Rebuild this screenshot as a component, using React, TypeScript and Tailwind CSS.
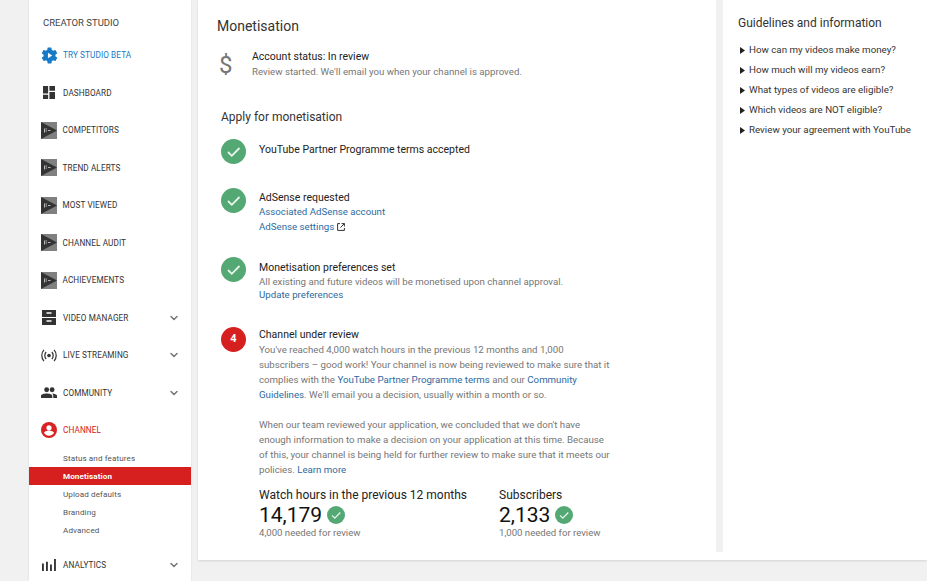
import React from "react";
import { ChevronDown } from "lucide-react";

function Vid() {
  return (
    <svg width="16" height="17" viewBox="0 0 16 17" className="block shrink-0">
      <rect width="16" height="17" fill="#808080" />
      <path d="M0 0 L16 8.5 L0 17 Z" fill="#333333" />
      <path d="M3.500 6.500v4M4.500 7h1.500M4.500 9h1.500M7 8.500h2.500" stroke="#c8c8c8" strokeWidth="0.9" fill="none" />
    </svg>
  );
}

const I = "#333333";
const icons: Record<string, React.ReactNode> = {
  gear: (
    <svg width="19" height="19" viewBox="0 0 24 24" className="block shrink-0">
      <path fill="#167ac6" d="M19.4 13c.04-.32.1-.66.1-1s-.06-.68-.1-1l2.1-1.65c.2-.15.25-.42.13-.64l-2-3.46c-.12-.22-.4-.3-.6-.22l-2.5 1c-.52-.4-1.08-.73-1.7-.98l-.38-2.65A.5.5 0 0 0 14 2h-4a.5.5 0 0 0-.5.42l-.37 2.65c-.62.25-1.18.58-1.7.98l-2.5-1c-.22-.08-.48 0-.6.22l-2 3.46c-.13.22-.07.5.12.64L4.6 11c-.04.32-.1.66-.1 1s.06.68.1 1l-2.1 1.65c-.2.15-.25.42-.13.64l2 3.46c.12.22.4.3.6.22l2.5-1c.52.4 1.08.73 1.7.98l.38 2.65c.03.24.24.42.5.42h4c.26 0 .47-.18.5-.42l.37-2.65c.62-.25 1.18-.58 1.7-.98l2.5 1c.22.08.48 0 .6-.22l2-3.46c.12-.22.07-.5-.12-.64z" />
      <path fill="#fff" d="M10 8.500v7l5.500-3.500z" />
    </svg>
  ),
  dash: (
    <svg width="12" height="13" viewBox="0 0 14 14" preserveAspectRatio="none" className="block shrink-0">
      <path fill={I} d="M0 0h6v8H0zM0 9.500h6V14H0zM7.500 0H14v5H7.500zM7.500 6.500H14V14H7.500z" />
    </svg>
  ),
  video: (
    <svg width="14" height="15" viewBox="0 0 14 16" preserveAspectRatio="none" className="block shrink-0">
      <path fill={I} fillRule="evenodd" d="M0 0h14v7.400H0zM0 8.600h14V16H0zM4.500 2.500v1.400h5V2.500zM4.500 11v1.400h5V11z" />
    </svg>
  ),
  live: (
    <svg width="16" height="13" viewBox="0 0 18 14" preserveAspectRatio="none" className="block shrink-0">
      <circle cx="9" cy="7" r="2" fill={I} />
      <path d="M5.800 3.200c-2 2.100-2 5.500 0 7.600M12.200 3.200c2 2.100 2 5.500 0 7.600M3.300 1c-3.200 3.400-3.200 8.600 0 12M14.700 1c3.200 3.400 3.200 8.600 0 12" fill="none" stroke={I} strokeWidth="1.400" />
    </svg>
  ),
  community: (
    <svg width="16" height="11" viewBox="0 0 17 12" preserveAspectRatio="none" className="block shrink-0">
      <circle cx="6" cy="3" r="2.600" fill={I} />
      <circle cx="11.800" cy="3" r="2.600" fill={I} />
      <path fill={I} d="M0 12V9.600C0 7.800 3.500 7 6 7s6 .8 6 2.600V12zM13 12V9.400c0-.9-.4-1.700-1.100-2.300 2 .1 5.100.9 5.100 2.500V12z" />
    </svg>
  ),
  channel: (
    <svg width="16" height="16" viewBox="0 0 16 16" className="block shrink-0">
      <circle cx="8" cy="8" r="8" fill="#d92323" />
      <circle cx="8" cy="5.800" r="2.600" fill="#fff" />
      <path fill="#fff" d="M3 11.100c0-1.600 3.300-2.600 5-2.600s5 1 5 2.600c-1.100 1.600-3 2.700-5 2.700s-3.900-1.100-5-2.700z" />
    </svg>
  ),
  analytics: (
    <svg width="14" height="12" viewBox="0 0 15 13" preserveAspectRatio="none" className="block shrink-0">
      <path fill={I} d="M0 5h2v8H0zM4.300 3h2v10h-2zM8.600 6h2v7h-2zM12.900 0h2v13h-2z" />
    </svg>
  ),
};

function Nav({ icon, label, cls = "text-[#333333]", chev, vid }: { icon?: string; label: string; cls?: string; chev?: boolean; vid?: boolean }) {
  return (
    <div className="h-[37.5px] flex items-center pl-[12px] pr-[11px]">
      <div className={`w-[16px] shrink-0 flex justify-center ${vid ? "mr-[5.5px]" : "mr-[6px]"}`}>
        {vid ? <Vid /> : icons[icon!]}
      </div>
      <span className={`text-[8.2px] tracking-[0.1px] ${cls}`}>{label}</span>
      {chev && <ChevronDown size={12} strokeWidth={3} className="ml-auto text-[#767676]" />}
    </div>
  );
}

function Sub({ label, active }: { label: string; active?: boolean }) {
  return (
    <div className={`h-[18px] flex items-center pl-[34px] text-[8.1px] tracking-[0.1px] ${active ? "bg-[#d5201f] text-white font-bold" : "text-[#555555]"}`}>
      {label}
    </div>
  );
}

function Check({ size = 25 }: { size?: number }) {
  return (
    <svg width={size} height={size} viewBox="0 0 25 25" className="block shrink-0">
      <circle cx="12.500" cy="12.500" r="12.500" fill="#54a873" />
      <path d="M7 13l3.800 3.800L18.500 9" fill="none" stroke="#e9f5ee" strokeWidth="1.800" />
    </svg>
  );
}

const link = "text-[#2d6aa0]";

function Metric({ title, value, note, cls }: { title: string; value: string; note: string; cls: string }) {
  return (
    <div className={cls}>
      <div className="text-[12px] leading-[14px] text-[#222222]">{title}</div>
      <div className="flex items-center gap-[5px] h-[24px] mt-[1px]">
        <span className="text-[21px] leading-[24px] text-[#111111]">{value}</span>
        <Check size={18} />
      </div>
      <div className="text-[9.6px] leading-[14px] text-[#767676] -mt-[1px]">{note}</div>
    </div>
  );
}

export default function App() {
  return (
    <div className="h-[581px] w-[927px] overflow-hidden bg-[#f1f1f1] flex items-start pl-[29px] font-['Roboto',sans-serif]">
      <aside className="w-[162px] h-[581px] shrink-0 bg-white shadow-[0_0_2px_rgba(0,0,0,0.1)] pt-[16px]">
        <div className="pl-[14px] text-[9.5px] leading-[14px] text-[#444444] mb-[6.5px]">CREATOR STUDIO</div>
        <Nav icon="gear" label="TRY STUDIO BETA" cls="text-[#167ac6]" />
        <Nav icon="dash" label="DASHBOARD" />
        <Nav vid label="COMPETITORS" />
        <Nav vid label="TREND ALERTS" />
        <Nav vid label="MOST VIEWED" />
        <Nav vid label="CHANNEL AUDIT" />
        <Nav vid label="ACHIEVEMENTS" />
        <Nav icon="video" label="VIDEO MANAGER" chev />
        <Nav icon="live" label="LIVE STREAMING" chev />
        <Nav icon="community" label="COMMUNITY" chev />
        <Nav icon="channel" label="CHANNEL" cls="text-[#d5201f]" />
        <div>
          <Sub label="Status and features" />
          <Sub label="Monetisation" active />
          <Sub label="Upload defaults" />
          <Sub label="Branding" />
          <Sub label="Advanced" />
        </div>
        <div className="mt-[7.5px]">
          <Nav icon="analytics" label="ANALYTICS" chev />
        </div>
      </aside>

      <div className="ml-[7px] flex-1 h-[560px] bg-white shadow-[0_1px_2px_rgba(0,0,0,0.12)] flex items-start">
        <main className="w-[518px] shrink-0 pt-[18px] pl-[19px]">
          <h1 className="text-[14px] leading-[17px] text-[#333333]">Monetisation</h1>
          <div className="flex mt-[15px]">
            <div className="w-[35px] pl-[2px] text-[24px] leading-[28px] text-[#767676] pt-[1px]">$</div>
            <div>
              <div className="text-[10.5px] leading-[14px] text-[#222222]">Account status: In review</div>
              <div className="text-[9.7px] leading-[16px] text-[#767676]">Review started. We'll email you when your channel is approved.</div>
            </div>
          </div>
          <div className="pl-[4px]">
            <h2 className="mt-[29px] text-[12px] leading-[16px] text-[#333333]">Apply for monetisation</h2>
            <div className="flex mt-[14px]">
              <Check />
              <div className="ml-[13px] text-[10.5px] leading-[14px] text-[#222222] pt-[4px]">YouTube Partner Programme terms accepted</div>
            </div>
            <div className="flex mt-[24px]">
              <Check />
              <div className="ml-[13px] text-[10.5px] leading-[14px] text-[#222222] pt-[3px]">
                <div>AdSense requested</div>
                <div className={`text-[9.7px] leading-[14.5px] ${link}`}>Associated AdSense account</div>
                <div className={`text-[9.7px] leading-[14.5px] ${link} flex items-center gap-[3px]`}>
                  AdSense settings
                  <svg width="8" height="8" viewBox="0 0 8 8" className="block">
                    <path d="M3 .6H.6v6.800h6.800V5M4.500.6h2.900v2.900M7.400.6L3.500 4.500" fill="none" stroke="#333333" strokeWidth="1" />
                  </svg>
                </div>
              </div>
            </div>
            <div className="flex mt-[23px]">
              <Check />
              <div className="ml-[13px] text-[10.5px] leading-[14px] text-[#222222] pt-[4px]">
                <div>Monetisation preferences set</div>
                <div className="text-[9.7px] leading-[14px] text-[#767676]">All existing and future videos will be monetised upon channel approval.</div>
                <div className={`text-[9.7px] leading-[12px] ${link}`}>Update preferences</div>
              </div>
            </div>
            <div className="flex mt-[26px]">
              <div className="w-[25px] h-[25px] rounded-full bg-[#d5201f] text-white flex items-center justify-center text-[11px] font-bold shrink-0">4</div>
              <div className="ml-[13px] pt-[1px]">
                <div className="text-[10.5px] leading-[14px] text-[#222222]">Channel under review</div>
                <div className="text-[9.7px] leading-[15px] text-[#767676] w-[353px] -mt-[0.5px]">
                  <p>You've reached 4,000 watch hours in the previous 12 months and 1,000 subscribers – good work! Your channel is now being reviewed to make sure that it complies with the <span className={link}>YouTube Partner Programme terms</span> and our <span className={link}>Community Guidelines</span>. We'll email you a decision, usually within a month or so.</p>
                  <p className="mt-[15px]">When our team reviewed your application, we concluded that we don't have enough information to make a decision on your application at this time. Because of this, your channel is being held for further review to make sure that it meets our policies. <span className={link}>Learn more</span></p>
                </div>
                <div className="flex mt-[11.5px]">
                  <Metric cls="w-[240px]" title="Watch hours in the previous 12 months" value="14,179" note="4,000 needed for review" />
                  <Metric cls="" title="Subscribers" value="2,133" note="1,000 needed for review" />
                </div>
              </div>
            </div>
          </div>
        </main>

        <div className="w-[7px] h-[552px] shrink-0 bg-[#f1f1f1]" />

        <section className="flex-1 pt-[15px] pl-[15px]">
          <h2 className="text-[12px] leading-[16px] text-[#333333]">Guidelines and information</h2>
          <ul className="mt-[9px] flex flex-col">
            {["How can my videos make money?", "How much will my videos earn?", "What types of videos are eligible?", "Which videos are NOT eligible?", "Review your agreement with YouTube"].map((t) => (
              <li key={t} className="h-[20px] flex items-center text-[9.75px] text-[#333333] whitespace-nowrap">
                <svg width="5" height="7" viewBox="0 0 5 7" className="block ml-[2px] mr-[4px] shrink-0">
                  <path d="M0 0l5 3.500-5 3.500z" fill="#222222" />
                </svg>
                {t}
              </li>
            ))}
          </ul>
        </section>
      </div>
    </div>
  );
}
